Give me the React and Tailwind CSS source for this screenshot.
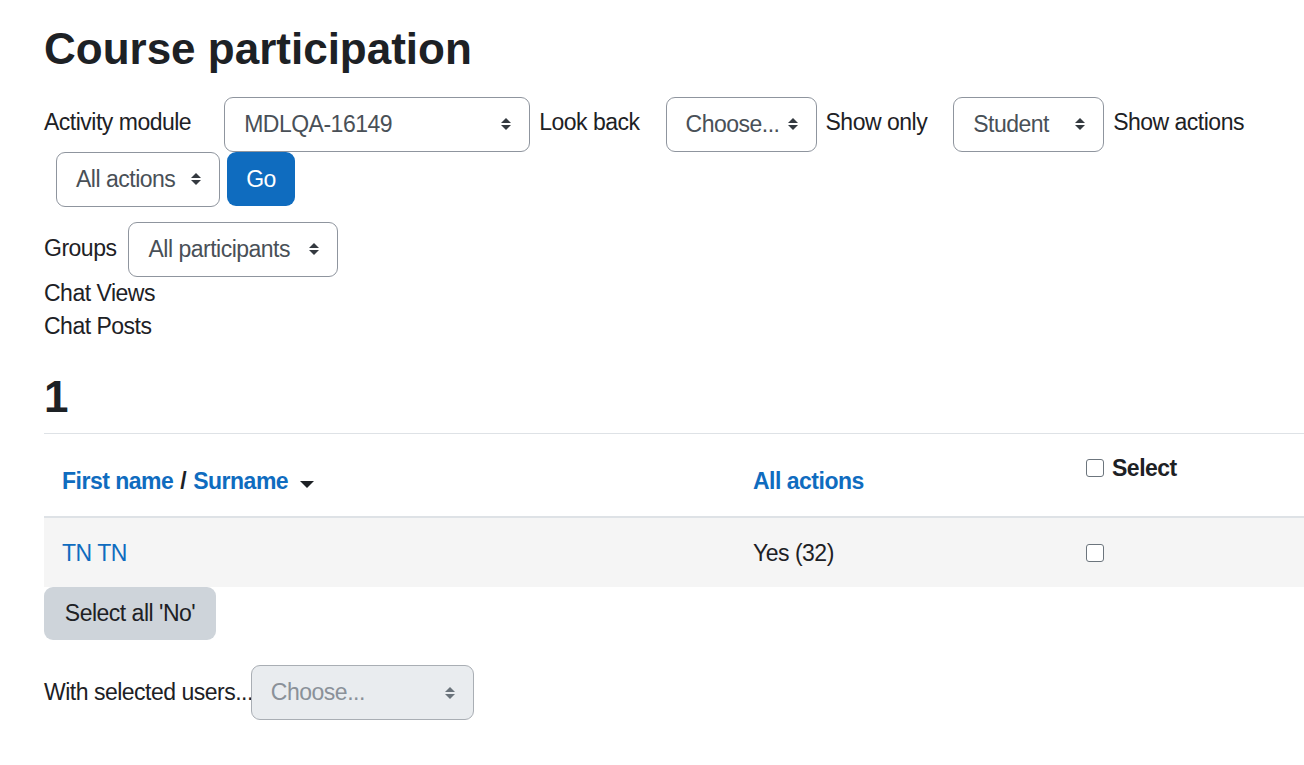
import React from "react";

const font = { fontFamily: '"Liberation Sans", Arial, sans-serif' };

function Arrows({ muted }) {
  return (
    <svg width="10" height="14" viewBox="0 0 10 14" className="shrink-0">
      <polygon points="0,6 5,1 10,6" fill={muted ? "#6a737b" : "#343a40"} />
      <polygon points="0,8 5,13 10,8" fill={muted ? "#6a737b" : "#343a40"} />
    </svg>
  );
}

function FakeSelect({ value, width, disabled, className = "" }) {
  return (
    <div
      className={`h-[55px] flex items-center justify-between pl-[19px] pr-[18px] rounded-[9px] border ${
        disabled ? "bg-[#e9ecef] text-[#8a9199] border-[#a9aeb4]" : "bg-white text-[#495057] border-[#8f959e]"
      } ${className}`}
      style={{ width }}
    >
      <span className="whitespace-nowrap">{value}</span>
      <Arrows muted={disabled} />
    </div>
  );
}

function Checkbox() {
  return <div className="w-[18px] h-[18px] rounded-[3px] border border-[#6c757d] bg-white" />;
}

export default function App() {
  return (
    <div
      className="min-h-screen bg-white text-[#1d2125] overflow-hidden text-[23px] leading-[1.5] tracking-[-0.5px]"
      style={font}
    >
      <div className="pt-[23px] pl-[44px]">
        <h1 className="text-[44px] font-bold leading-[1.2] tracking-normal mb-[21px]">Course participation</h1>

        {/* filter form */}
        <div className="flex items-center h-[55px]">
          <span className="mr-[33px] -mt-[4px]">Activity module</span>
          <FakeSelect value="MDLQA-16149" width={306} className="mr-[9px]" />
          <span className="mr-[26px] -mt-[4px]">Look back</span>
          <FakeSelect value="Choose..." width={151} className="mr-[9px]" />
          <span className="mr-[26px] -mt-[4px]">Show only</span>
          <FakeSelect value="Student" width={151} className="mr-[9px]" />
          <span className="-mt-[4px]">Show actions</span>
        </div>
        <div className="flex items-center h-[55px] pl-[12px]">
          <FakeSelect value="All actions" width={164} />
          <button className="ml-[7px] w-[68px] h-[54px] rounded-[9px] bg-[#0f6cbf] text-white">Go</button>
        </div>
        <div className="flex items-center h-[55px] mt-[15px]">
          <span className="mr-[12px] -mt-[2px]">Groups</span>
          <FakeSelect value="All participants" width={210} />
        </div>
        <div className="leading-[33px]">Chat Views</div>
        <div className="leading-[33px]">Chat Posts</div>

        <h2 className="text-[44px] font-bold leading-[1.2] tracking-normal mt-[28px] mb-[9px]">1</h2>
      </div>

      {/* table */}
      <div className="ml-[44px] border-t border-[#dee2e6]">
        <div className="grid grid-cols-[691px_333px_1fr] border-b-2 border-[#dee2e6] h-[84px]">
          <div className="self-end px-[18px] pb-[17px] font-bold flex items-center">
            <span className="text-[#0f6cbf]">First name</span>
            <span className="mx-[7px]">/</span>
            <span className="text-[#0f6cbf]">Surname</span>
            <svg width="14" height="8" viewBox="0 0 14 8" className="ml-[12px] mt-[8px]">
              <polygon points="0,0 14,0 7,7" fill="#1d2125" />
            </svg>
          </div>
          <div className="self-end px-[18px] pb-[17px] font-bold text-[#0f6cbf]">All actions</div>
          <div className="self-start px-[18px] pt-[17px] font-bold flex items-center">
            <Checkbox />
            <span className="ml-[8px]">Select</span>
          </div>
        </div>
        <div className="grid grid-cols-[691px_333px_1fr] bg-[#f5f5f5] pt-[18px] pb-[17px]">
          <div className="px-[18px] text-[#0f6cbf]">TN TN</div>
          <div className="px-[18px]">Yes (32)</div>
          <div className="px-[18px] flex items-center">
            <Checkbox />
          </div>
        </div>
      </div>

      <div className="pl-[44px]">
        <button className="h-[53px] w-[172px] rounded-[9px] bg-[#ced4da] text-[#1d2125]">Select all 'No'</button>
        <div className="flex items-center mt-[25px]">
          <span className="-mr-[2px]">With selected users...</span>
          <FakeSelect value="Choose..." width={223} disabled className="h-[53px]" />
        </div>
      </div>
    </div>
  );
}
